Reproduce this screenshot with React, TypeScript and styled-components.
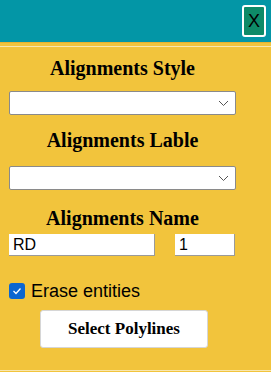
import React, { useState } from 'react';
import styled, { createGlobalStyle } from 'styled-components';

const GlobalStyle = createGlobalStyle`
  html, body {
    margin: 0;
    padding: 0;
    width: 271px;
    height: 372px;
    overflow: hidden;
    background: #f2c43c;
  }
`;

const Window = styled.div`
  display: flex;
  flex-direction: column;
  width: 271px;
  height: 372px;
  background: #f2c43c;
`;

const Header = styled.div`
  display: flex;
  justify-content: flex-end;
  align-items: flex-start;
  height: 43px;
  padding: 5px 5px 0 0;
  box-sizing: border-box;
  background: #0396a6;
  border-bottom: 1px solid #e8b22e;
`;

const CloseBtn = styled.button`
  width: 24px;
  height: 32px;
  padding: 0;
  background: #0e8a68;
  border: 2px solid #ffffff;
  border-radius: 3px;
  color: #000;
  font-family: 'Liberation Sans', Arial, sans-serif;
  font-size: 18px;
  line-height: 26px;
  cursor: pointer;
`;

const Body = styled.div`
  flex: 1;
  display: flex;
  flex-direction: column;
  align-items: stretch;
  padding: 0 9px;
  border-top: 1px solid #f7e6b0;
  border-bottom: 1px solid #f7e6b0;
  margin: 3px 0 1px;
`;

const Title = styled.h3<{ $top: number }>`
  margin: ${(p) => p.$top}px 0 0 0;
  width: 227px;
  text-align: center;
  font-family: 'Liberation Serif', 'Times New Roman', serif;
  font-weight: bold;
  font-size: 20px;
  line-height: 24px;
  color: #000;
`;

const SelectBox = styled.div<{ $top: number }>`
  position: relative;
  margin-top: ${(p) => p.$top}px;
  width: 227px;
  height: 24px;
  box-sizing: border-box;
  background: #fff;
  border: 1px solid #8a8a8a;
  border-radius: 2px;

  svg {
    position: absolute;
    right: 6px;
    top: 8px;
  }
`;

const NameRow = styled.div`
  display: flex;
  gap: 20px;
  margin-top: 4px;
`;

const TextInput = styled.input<{ $w: number }>`
  width: ${(p) => p.$w}px;
  height: 22px;
  box-sizing: border-box;
  padding: 0 4px;
  border: none;
  border-right: 1px solid #9a9a9a;
  border-bottom: 1px solid #9a9a9a;
  background: #fff;
  font-family: 'Liberation Sans', Arial, sans-serif;
  font-size: 16px;
  color: #000;
  outline: none;
`;

const CheckRow = styled.label`
  display: flex;
  align-items: center;
  gap: 6px;
  margin-top: 25px;
  height: 20px;
  font-family: 'Liberation Sans', Arial, sans-serif;
  font-size: 18px;
  color: #000;
`;

const Check = styled.span`
  display: flex;
  align-items: center;
  justify-content: center;
  width: 16px;
  height: 16px;
  border-radius: 3px;
  background: #0b66d0;
`;

const ActionBtn = styled.button`
  align-self: flex-start;
  margin: 9px 0 0 31px;
  width: 168px;
  height: 38px;
  background: #fff;
  border: 1px solid #d6d6d6;
  border-radius: 3px;
  font-family: 'Liberation Serif', 'Times New Roman', serif;
  font-weight: bold;
  font-size: 17px;
  color: #000;
  cursor: pointer;
`;

const Chevron = () => (
  <svg width="11" height="7" viewBox="0 0 11 7" fill="none">
    <path d="M1 1 L5.5 5.5 L10 1" stroke="#555" strokeWidth="1" />
  </svg>
);

export default function App() {
  const [name, setName] = useState('RD');
  const [num, setNum] = useState('1');
  return (
    <Window>
      <GlobalStyle />
      <Header>
        <CloseBtn>X</CloseBtn>
      </Header>
      <Body>
        <Title $top={9}>Alignments Style</Title>
        <SelectBox $top={11}>
          <Chevron />
        </SelectBox>
        <Title $top={13}>Alignments Lable</Title>
        <SelectBox $top={14}>
          <Chevron />
        </SelectBox>
        <Title $top={16}>Alignments Name</Title>
        <NameRow>
          <TextInput $w={146} value={name} onChange={(e) => setName(e.target.value)} />
          <TextInput $w={60} value={num} onChange={(e) => setNum(e.target.value)} />
        </NameRow>
        <CheckRow>
          <Check>
            <svg width="10" height="8" viewBox="0 0 10 8" fill="none">
              <path d="M1.5 4 L4 6.5 L8.5 1.5" stroke="#fff" strokeWidth="1.3" />
            </svg>
          </Check>
          Erase entities
        </CheckRow>
        <ActionBtn>Select Polylines</ActionBtn>
      </Body>
    </Window>
  );
}
